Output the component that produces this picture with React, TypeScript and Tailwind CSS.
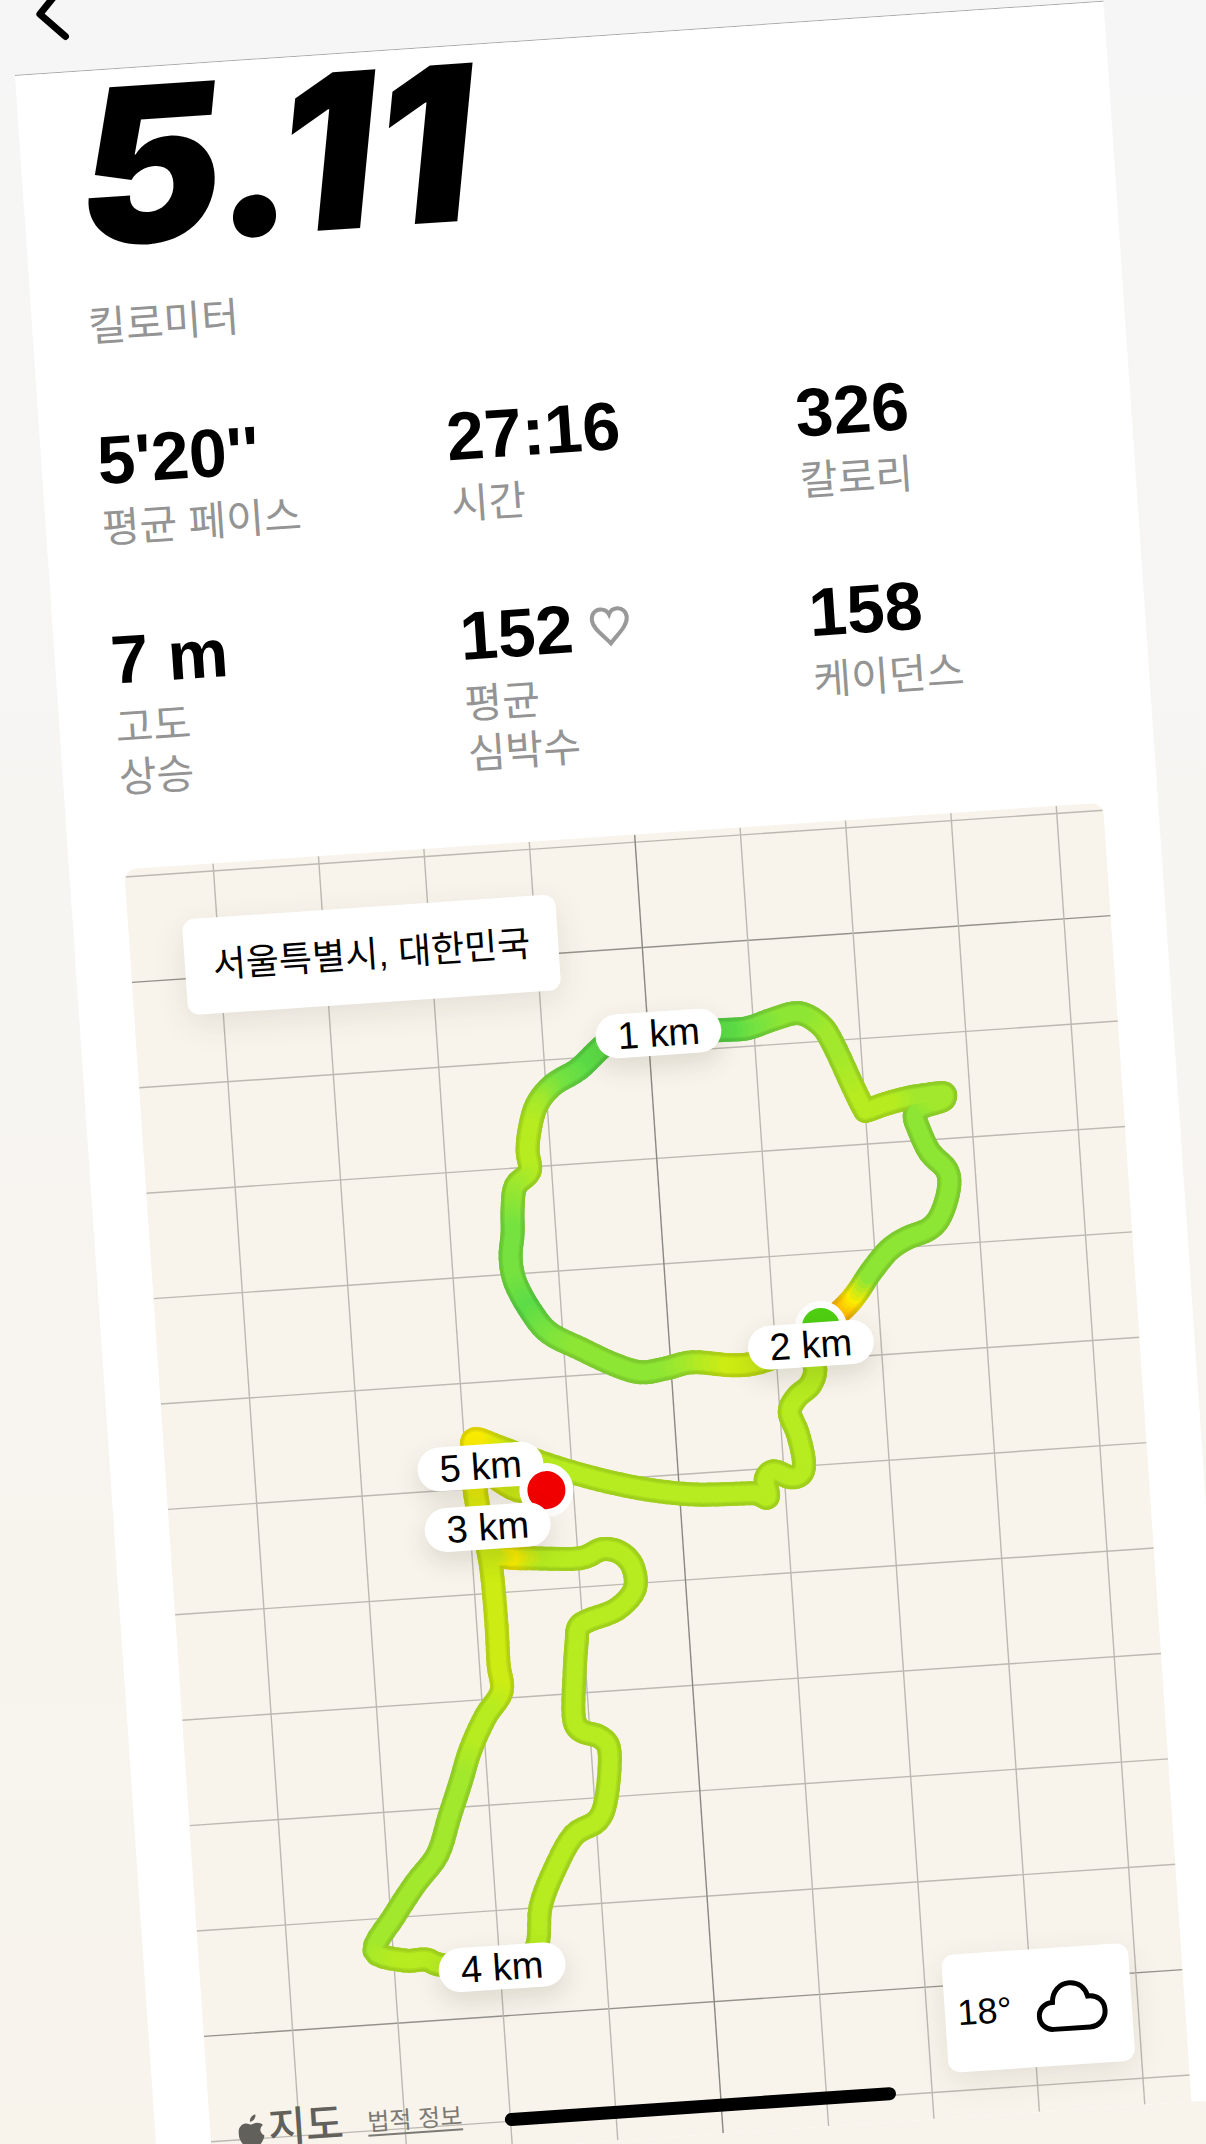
import React from 'react';

type RGB = [number, number, number];
type Point = [number, number, RGB];

const GREEN: RGB = [92, 220, 70];
const MEADOW: RGB = [118, 226, 64];
const FRESH: RGB = [142, 230, 52];
const LEAF: RGB = [162, 232, 44];
const LIME: RGB = [182, 236, 32];
const CITRUS: RGB = [204, 236, 20];
const YELLOW: RGB = [250, 236, 0];
const ORANGE: RGB = [255, 176, 0];

/* GPS track of the run, in kilometre order, coloured by pace. */
const TRACK: Point[] = [
  [822, 1328, ORANGE], [844, 1309, ORANGE], [857, 1294, YELLOW], [871, 1273, FRESH],
  [889, 1251, FRESH], [907, 1239, FRESH], [929, 1230, FRESH], [941, 1216, FRESH],
  [949, 1190, FRESH], [947, 1171, FRESH], [930, 1153, FRESH], [919, 1130, FRESH],
  [915, 1116, FRESH], [922, 1108, FRESH], [941, 1102, LEAF], [945, 1098, LEAF],
  [943, 1094, LEAF], [925, 1096, LEAF], [907, 1099, LEAF], [885, 1105, LIME],
  [868, 1111, LIME], [864, 1109, LIME], [853, 1087, LIME], [833, 1044, LEAF],
  [820, 1025, LEAF], [799, 1014, FRESH], [774, 1020, FRESH], [748, 1029, MEADOW],
  [723, 1031, GREEN], [660, 1034, GREEN], [620, 1035, GREEN], [601, 1049, GREEN],
  [579, 1070, GREEN], [553, 1086, MEADOW], [537, 1106, LEAF], [530, 1131, LIME],
  [528, 1152, LIME], [530, 1172, LIME], [516, 1187, LEAF], [513, 1209, FRESH],
  [513, 1234, MEADOW], [511, 1259, MEADOW], [516, 1284, MEADOW], [532, 1313, GREEN],
  [550, 1334, MEADOW], [582, 1350, FRESH], [614, 1365, FRESH], [641, 1373, FRESH],
  [667, 1369, FRESH], [693, 1363, LEAF], [733, 1366, CITRUS], [760, 1363, CITRUS],
  [800, 1350, LIME], [815, 1367, LIME], [811, 1385, LIME], [797, 1398, LIME],
  [790, 1413, LIME], [798, 1434, LIME], [804, 1460, LIME], [802, 1474, LIME],
  [791, 1478, LIME], [774, 1472, LIME], [766, 1480, LIME], [768, 1498, LIME],
  [755, 1494, LIME], [723, 1495, LIME], [690, 1495, LIME], [653, 1491, LIME],
  [620, 1485, LIME], [587, 1477, LIME], [547, 1465, LIME], [500, 1448, CITRUS],
  [475, 1440, YELLOW], [473, 1456, YELLOW], [475, 1490, CITRUS], [481, 1522, CITRUS],
  [489, 1553, CITRUS], [493, 1580, CITRUS], [497, 1627, CITRUS], [499, 1665, CITRUS],
  [502, 1692, CITRUS], [486, 1717, LIME], [471, 1750, LIME], [461, 1783, LEAF],
  [450, 1817, LEAF], [438, 1855, LEAF], [416, 1884, LEAF], [395, 1916, LEAF],
  [375, 1951, LEAF], [405, 1961, LIME], [426, 1960, LIME], [445, 1966, LIME],
  [505, 1968, LIME], [536, 1950, LIME], [541, 1907, LIME], [555, 1870, LIME],
  [574, 1836, LIME], [598, 1821, LIME], [607, 1797, LIME], [610, 1753, LIME],
  [601, 1738, LIME], [581, 1731, LIME], [574, 1716, LIME], [575, 1673, LIME],
  [577, 1643, LIME], [579, 1628, LIME], [589, 1621, LIME], [617, 1610, LIME],
  [635, 1590, LIME], [633, 1567, LIME], [620, 1553, LIME], [602, 1550, LIME],
  [580, 1559, LIME], [533, 1559, LIME], [508, 1558, YELLOW], [492, 1553, CITRUS],
  [480, 1515, CITRUS], [474, 1460, YELLOW], [490, 1474, YELLOW], [518, 1491, CITRUS],
  [547, 1491, CITRUS],
];

const spline = (a: number, b: number, c: number, d: number, t: number) =>
  0.5 * (2 * b + (c - a) * t + (2 * a - 5 * b + 4 * c - d) * t * t + (3 * b - a - 3 * c + d) * t * t * t);

function samplePath(points: Point[], steps: number): Point[] {
  const out: Point[] = [];
  for (let i = 0; i < points.length - 1; i++) {
    const p0 = points[Math.max(i - 1, 0)];
    const p1 = points[i];
    const p2 = points[i + 1];
    const p3 = points[Math.min(i + 2, points.length - 1)];
    for (let s = 0; s < steps; s++) {
      const t = s / steps;
      const mix = p1[2].map((v, k) => v + (p2[2][k] - v) * t) as RGB;
      out.push([spline(p0[0], p1[0], p2[0], p3[0], t), spline(p0[1], p1[1], p2[1], p3[1], t), mix]);
    }
  }
  out.push(points[points.length - 1]);
  return out;
}

const SAMPLES = samplePath(TRACK, 5);

function TrackLayer({ width, shade }: { width: number; shade: number }) {
  return (
    <g strokeWidth={width} strokeLinecap="round">
      {SAMPLES.slice(1).map(([x, y, color], i) => (
        <line
          key={i}
          x1={SAMPLES[i][0]}
          y1={SAMPLES[i][1]}
          x2={x}
          y2={y}
          stroke={`rgb(${color.map((c) => Math.round(c * shade)).join(',')})`}
        />
      ))}
    </g>
  );
}

const GRID = 105.6;

function RouteMap() {
  return (
    <svg viewBox="0 0 981 1301" className="block h-auto w-full" role="img" aria-label="러닝 경로">
      <g strokeWidth="1.4">
        {Array.from({ length: 13 }, (_, i) => (
          <line key={i} x1="0" x2="981" y1={7.6 + GRID * i} y2={7.6 + GRID * i} stroke={i % 10 === 1 ? '#94928c' : '#bcb9b2'} />
        ))}
        {Array.from({ length: 9 }, (_, i) => (
          <line key={i} y1="0" y2="1301" x1={89 + GRID * i} x2={89 + GRID * i} stroke={i === 4 ? '#8a8882' : '#bcb9b2'} />
        ))}
      </g>
      <g transform="translate(-55.5 -800) rotate(3.9) translate(-15 -76)">
        <TrackLayer width={24} shade={0.88} />
        <TrackLayer width={18} shade={0.94} />
        <TrackLayer width={15} shade={1} />
      </g>
    </svg>
  );
}

function KmMarker({ place, children }: { place: string; children: React.ReactNode }) {
  return (
    <span
      className={`absolute -translate-x-1/2 -translate-y-1/2 rounded-full bg-white px-[22px] text-[38px] leading-[44px] whitespace-nowrap text-black shadow-[0_10px_26px_rgba(60,50,20,0.14)] ${place}`}
    >
      {children}
    </span>
  );
}

function Stat({ value, label, icon }: { value: string; label: string[]; icon?: React.ReactNode }) {
  return (
    <div className="flex flex-col-reverse justify-end">
      <dt className="text-[41px] leading-[50px] text-[#949494]">
        {label.map((line) => (
          <span key={line} className="block">
            {line}
          </span>
        ))}
      </dt>
      <dd className="flex items-center gap-4 text-[68px] leading-[88px] font-bold text-black">
        {value}
        {icon}
      </dd>
    </div>
  );
}

function HeartIcon() {
  return (
    <svg viewBox="0 0 42 42" className="size-[42px]" fill="none" stroke="#999" strokeWidth="4" aria-hidden="true">
      <path d="M21 38.5C14 30 3.5 22.500 3.500 13.500C3.500 8 7.500 4 12.500 4C16.500 4 19.500 6 21 9.500C22.500 6 25.500 4 29.500 4C34.500 4 38.500 8 38.500 13.500C38.500 22.500 28 30 21 38.500Z" />
    </svg>
  );
}

function CloudIcon() {
  return (
    <svg viewBox="0 0 72 52" className="h-[52px] w-[72px]" fill="none" stroke="#000" strokeWidth="5" aria-label="흐림" role="img">
      <path d="M16.500 48.500C9 48.500 3 42.500 3 35C3 27.500 9 21.500 17 21.500C17.500 11 25 3 35 3C44 3 50.500 8.500 52.500 17.500C62 16.500 69 23.500 69 32.500C69 41.500 62 48.500 53 48.500Z" />
    </svg>
  );
}

function AppleIcon() {
  return (
    <svg viewBox="0 0 26 32" className="h-8 w-[26px]" fill="#62605b" aria-label="Apple" role="img">
      <path d="M18.200 0C18.400 3.800 15.500 7.200 12.300 7.200C11.900 3.700 15 0.300 18.200 0Z" />
      <path d="M25 11.200C20.800 13.800 21.300 19.700 26 21.700C25 25 21.900 31.200 18.700 31.500C16.600 31.600 15.700 30.300 13.300 30.300C10.800 30.300 9.900 31.500 7.900 31.600C4.400 31.700 0 24.500 0 18.300C0 12 3.900 8.500 7.900 8.500C10.200 8.500 12 9.900 13.300 9.900C14.600 9.900 16.800 8.200 19.500 8.400C21.500 8.500 23.700 9.300 25 11.200Z" />
    </svg>
  );
}

export default function App() {
  return (
    <main className="min-h-screen overflow-hidden bg-linear-to-b from-[#f6f6f6] to-[#f8f4ec] font-['Liberation_Sans','Noto_Sans_CJK_KR',sans-serif]">
      <div className="-mb-9 ml-[15px] w-[90.5%] origin-[0_76px] rotate-[-3.9deg]">
        <header className="flex h-[76px] items-start border-b border-[#a8a8a8] pl-4">
          <button type="button" aria-label="뒤로" className="-mt-4 flex size-16 items-center justify-start">
            <svg viewBox="0 0 48 64" className="h-16 w-12" fill="none" stroke="#000" strokeWidth="7" strokeLinecap="round" strokeLinejoin="round">
              <path d="M37 6L13 32L37 56" />
            </svg>
          </button>
        </header>

        <section className="bg-white">
          <div className="px-14">
            <h1 className="font-['Inter'] text-[216px] leading-[193px] font-black whitespace-nowrap text-black italic">5.11</h1>
            <p className="mt-[38px] text-[41px] leading-[50px] text-[#949494]">킬로미터</p>
            <dl className="mt-16 grid grid-cols-3 gap-x-[70px] gap-y-[62px]">
              <Stat value="5'20''" label={['평균 페이스']} />
              <Stat value="27:16" label={['시간']} />
              <Stat value="326" label={['칼로리']} />
              <Stat value="7 m" label={['고도', '상승']} />
              <Stat value="152" label={['평균', '심박수']} icon={<HeartIcon />} />
              <Stat value="158" label={['케이던스']} />
            </dl>
          </div>

          <div className="relative mx-[55px] mt-[66px] overflow-hidden rounded-t-xl bg-[#f8f4ec]">
            <RouteMap />
            <p className="absolute top-[54px] left-[54px] rounded-xl bg-white px-7 py-6 text-4xl leading-[48px] whitespace-nowrap text-black shadow-[0_10px_32px_rgba(60,50,20,0.10)]">
              서울특별시, 대한민국
            </p>

            <span className="absolute top-[38.7%] left-[67.7%] size-[52px] -translate-x-1/2 -translate-y-1/2 rounded-full border-[7px] border-white bg-[#4fcf12]" />
            <KmMarker place="top-[15.4%] left-[53.2%]">1 km</KmMarker>
            <KmMarker place="top-[40%] left-[66.5%]">2 km</KmMarker>
            <KmMarker place="top-[47.6%] left-[32.1%]">5 km</KmMarker>
            <span className="absolute top-[49.8%] left-[38.6%] size-[54px] -translate-x-1/2 -translate-y-1/2 rounded-full border-8 border-white bg-[#f00000]" />
            <KmMarker place="top-[52.3%] left-[32.4%]">3 km</KmMarker>
            <KmMarker place="top-[86.1%] left-[30.8%]">4 km</KmMarker>

            <div className="absolute right-[53px] bottom-[45px] flex h-[118px] w-[187px] items-center justify-between rounded-xl bg-white pr-6 pl-3 shadow-[0_10px_32px_rgba(60,50,20,0.10)]">
              <span className="text-4xl text-black">18°</span>
              <CloudIcon />
            </div>

            <div className="absolute bottom-0 left-7 flex h-[70px] items-center">
              <AppleIcon />
              <span className="ml-1 text-[41px] leading-none font-medium text-[#62605b]">지도</span>
              <a href="#legal" className="ml-6 text-2xl leading-none text-[#7c7a75] underline decoration-2 underline-offset-4">
                법적 정보
              </a>
            </div>
            <div className="absolute bottom-[22px] left-1/2 h-[13px] w-[40%] -translate-x-1/2 rounded-full bg-black" />
          </div>
        </section>
      </div>
    </main>
  );
}
